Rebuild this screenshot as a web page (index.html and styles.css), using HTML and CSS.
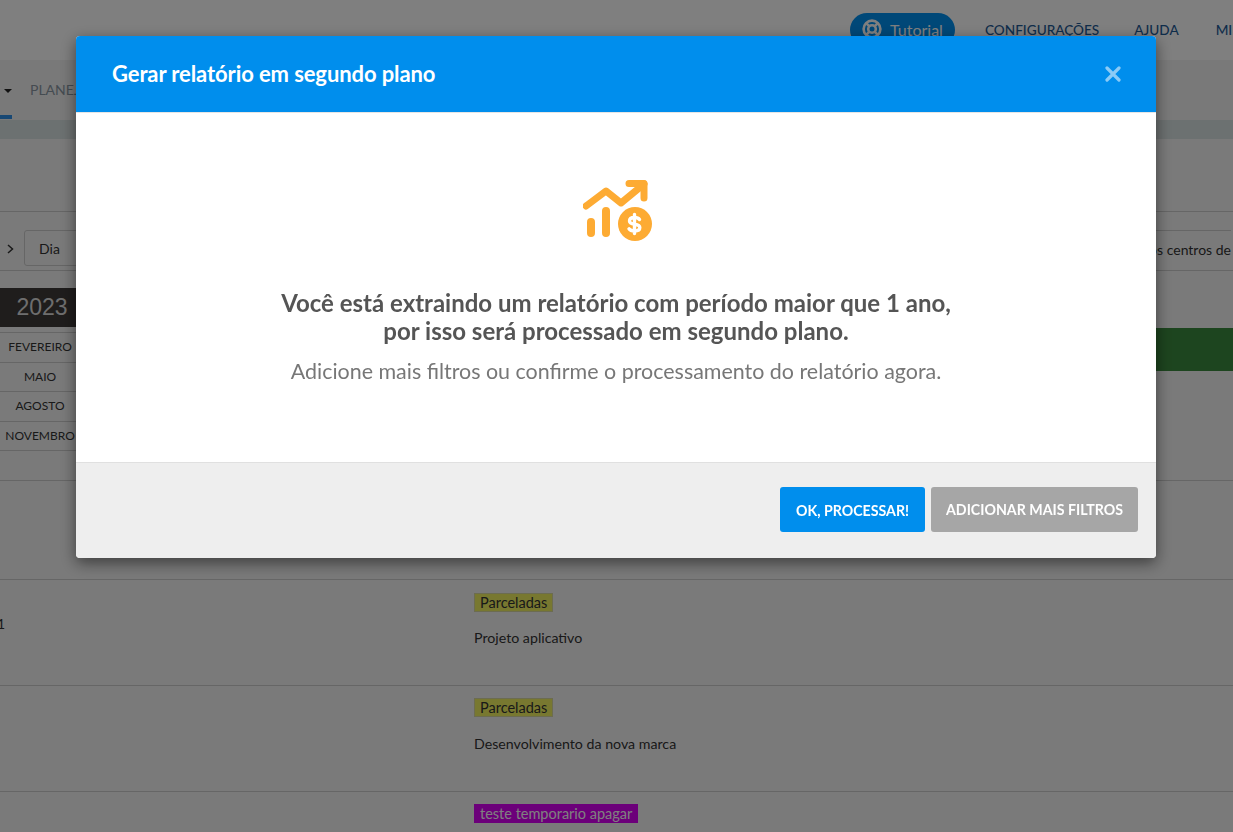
FILE: index.html
```html
<!DOCTYPE html>
<html lang="pt-BR">
<head>
<meta charset="utf-8">
<title>Gerar relatório em segundo plano</title>
<link rel="stylesheet" href="styles.css">
</head>
<body>
<div class="page">
  <header class="topbar">
    <a class="tutorial">
      <svg class="buoy" viewBox="0 0 20 20" width="20" height="20" aria-hidden="true">
        <circle cx="10" cy="10" r="8.4"/><circle cx="10" cy="10" r="3.8"/>
        <path d="M4.200 4.200l3.200 3.200M15.800 4.200l-3.200 3.200M4.200 15.800l3.200-3.200M15.800 15.800l-3.200-3.200"/>
      </svg>
      <span class="tutorial-label">Tutorial</span>
    </a>
    <a class="toplink">CONFIGURAÇÕES</a>
    <a class="toplink second">AJUDA</a>
    <a class="toplink last">MI</a>
  </header>
  <nav class="mainnav">
    <span class="nav-active"><i class="caret"></i></span>
    <span class="nav-item">PLANEJAMENTO</span>
  </nav>
  <div class="strip"></div>
  <div class="spacer"></div>
  <div class="toolbar">
    <svg class="chev" viewBox="0 0 7 10" width="7" height="10" aria-hidden="true"><path d="M1 1l4.500 4L1 9"/></svg>
    <span class="daybtn">Dia</span>
    <span class="filter">Todos os centros de</span>
  </div>
  <div class="calendar">
    <div class="months">
      <div class="year">2023</div>
      <div class="month">FEVEREIRO</div>
      <div class="month">MAIO</div>
      <div class="month">AGOSTO</div>
      <div class="month">NOVEMBRO</div>
    </div>
    <div class="balance"></div>
  </div>
  <div class="row row-a"></div>
  <div class="row row-b">
    <div class="cell-left">1</div>
    <div class="cell-right">
      <span class="tag tag-yellow">Parceladas</span>
      <span class="desc">Projeto aplicativo</span>
    </div>
  </div>
  <div class="row row-c">
    <div class="cell-left"></div>
    <div class="cell-right">
      <span class="tag tag-yellow">Parceladas</span>
      <span class="desc">Desenvolvimento da nova marca</span>
    </div>
  </div>
  <div class="row row-d">
    <div class="cell-left"></div>
    <div class="cell-right">
      <span class="tag tag-purple">teste temporario apagar</span>
    </div>
  </div>
</div>

<div class="backdrop"></div>
<div class="overlay">
  <section class="modal">
    <header class="modal-head">
      <h2 class="modal-title">Gerar relatório em segundo plano</h2>
      <svg class="close" viewBox="0 0 16 16" width="16" height="16" aria-hidden="true"><path d="M2 2l12 12M14 2L2 14"/></svg>
    </header>
    <div class="modal-body">
      <svg class="report-icon" viewBox="0 0 70 62" width="70" height="62" aria-hidden="true">
        <path class="line" d="M3 27L23 12L38 24L61 5"/>
        <path class="line" d="M46 4.500H61V19"/>
        <path class="bar" d="M8 43V54M23 32V54"/>
        <circle class="coin" cx="52" cy="45" r="17"/>
        <path class="dollar" d="M56.500 40.500C55.500 39 54 38.500 51.500 38.500C48.500 38.500 46.500 39.800 46.500 42C46.500 46.800 56.800 43.800 56.800 48.500C56.800 50.500 54.800 52 51.500 52C49 52 47 51.300 46 49.800M51.500 35.500V54.500"/>
      </svg>
      <h3 class="lead">Você está extraindo um relatório com período maior que 1 ano,<br>por isso será processado em segundo plano.</h3>
      <p class="sub">Adicione mais filtros ou confirme o processamento do relatório agora.</p>
    </div>
    <footer class="modal-foot">
      <button class="btn btn-primary">OK, PROCESSAR!</button>
      <button class="btn btn-muted">ADICIONAR MAIS FILTROS</button>
    </footer>
  </section>
</div>
</body>
</html>
```
FILE: styles.css
```css
* { box-sizing: border-box; }
html, body { margin: 0; height: 100%; overflow: hidden; }
body { font-family: Lato, "Open Sans", sans-serif; color: #333; background: #f5f5f5; }

.page { height: 832px; overflow: hidden; }

.topbar {
  height: 60px; background: #fff; display: flex; align-items: flex-start;
  padding-top: 13px; white-space: nowrap; overflow: hidden;
}
.tutorial {
  margin-left: 850px; width: 105px; height: 34px; border-radius: 17px; background: #0090f0;
  color: #fff; font-size: 16px; display: flex; align-items: center; gap: 8px; padding: 0 0 0 12px;
  flex: none;
}
.tutorial-label { margin-top: -2px; }
.buoy { fill: none; stroke: #fff; stroke-width: 2.600; flex: none; margin-top: -2px; }
.toplink { color: #1d5a96; font-size: 13.600px; font-weight: 500; margin-left: 30px; line-height: 34px; flex: none; }
.toplink.second { margin-left: 35px; }
.toplink.last { margin-left: 37px; }

.mainnav { height: 60px; background: #f3f3f3; display: flex; padding-top: 22px; overflow: hidden; }
.nav-active { width: 12px; height: 37px; border-bottom: 4px solid #3090e8; flex: none; position: relative; }
.caret {
  position: absolute; left: 4px; top: 7px; width: 0; height: 0;
  border-left: 4px solid transparent; border-right: 4px solid transparent; border-top: 4px solid #222;
}
.nav-item { margin-left: 18px; margin-top: -1px; font-size: 14px; white-space: nowrap; color: #8a97a3; }

.strip { height: 19px; background: #d9e2e2; }
.spacer { height: 73px; background: #f5f5f5; border-bottom: 1px solid #ccc; }

.toolbar {
  height: 59px; border-bottom: 1px solid #ccc; display: flex; align-items: flex-start;
  padding-top: 18px; font-size: 14px; white-space: nowrap; overflow: hidden;
}
.chev { margin: 14px 10px 0 7px; fill: none; stroke: #333; stroke-width: 1.500; flex: none; }
.daybtn {
  width: 60px; height: 36px; border: 1px solid #ccc; border-radius: 3px; display: flex; align-items: center;
  justify-content: center; padding-right: 9px; flex: none; color: #333;
}
.filter {
  margin-left: auto; margin-right: 2px; height: 41px; line-height: 37px; border-top: 1px solid #ccc;
  color: #333; flex: none; padding-left: 60px; font-size: 14px;
}

.calendar { height: 210px; border-bottom: 1px solid #ccc; display: flex; justify-content: space-between; }
.months { width: 80px; padding-top: 17px; font-size: 12px; text-align: center; }
.year {
  height: 39px; background: #3e3a39; color: #ddd; font-family: "Liberation Sans", Arial, sans-serif;
  font-size: 23px; line-height: 39px; padding-left: 4px; margin-bottom: 5px;
}
.month { height: 29.700px; line-height: 27px; border-top: 1px solid #ccc; color: #333; white-space: nowrap; }
.month:last-child { border-bottom: 1px solid #ccc; height: 30px; }
.balance { width: 77px; height: 43px; margin-top: 57px; background: #3b8a3e; }

.row { border-bottom: 1px solid #ccc; display: flex; overflow: hidden; }
.row-a { height: 99px; }
.row-b { height: 106px; }
.row-c { height: 106px; }
.row-d { height: 40px; border-bottom: 0; }
.cell-left { width: 474px; padding-top: 35px; flex: none; color: #333; font-size: 14px; text-indent: -3px; }
.cell-right { padding-top: 13px; display: flex; flex-direction: column; align-items: flex-start; gap: 17px; }
.row-c .cell-right { padding-top: 12px; gap: 18px; }
.row-d .cell-right { padding-top: 12px; }
.tag { font-size: 14.500px; line-height: 17px; padding: 0 5px; height: 19px; border: 1px solid #d8d8a0; white-space: nowrap; }
.tag-yellow { background: #f0f060; color: #333; }
.tag-purple { background: #d800f4; border-color: #d800f4; color: #fff; padding: 0 5px; }
.desc { color: #333; font-size: 14.200px; line-height: 17px; }

.backdrop { position: fixed; inset: 0; background: rgba(0, 0, 0, .5); }
.overlay { position: fixed; inset: 0; padding: 36px 0 0 76px; }

.modal {
  width: 1080px; height: 522px; background: #fff; border-radius: 4px;
  box-shadow: 0 5px 15px rgba(0, 0, 0, .5); display: flex; flex-direction: column; overflow: hidden;
}
.modal-head {
  height: 77px; flex: none; background: #008eed; border-bottom: 1px solid #e5e5e5; padding: 0 35px 0 36px;
  display: flex; align-items: center; justify-content: space-between;
}
.modal-title { margin: 0 0 2px; color: #fff; font-size: 22px; font-weight: 700; letter-spacing: -.1px; }
.close { stroke: #8ccbf6; stroke-width: 3.200; fill: none; stroke-linecap: round; }

.modal-body { flex: 1; text-align: center; padding-top: 66px; color: #555; }
.report-icon { display: block; margin: 0 auto; transform: translateX(2px); fill: none; }
.report-icon .line { stroke: #fdab33; stroke-width: 7; stroke-linecap: round; stroke-linejoin: round; }
.report-icon .bar { stroke: #fdab33; stroke-width: 8; stroke-linecap: round; }
.report-icon .coin { fill: #fdab33; }
.report-icon .dollar { stroke: #fff; stroke-width: 3.400; stroke-linecap: round; stroke-linejoin: round; }
.lead { margin: 48px 0 0; font-size: 24px; line-height: 28px; font-weight: 700; color: #555; }
.sub { margin: 12px 0 0; font-size: 21.450px; line-height: 28px; color: #777; }

.modal-foot {
  height: 96px; flex: none; background: #eee; border-top: 1px solid #e0e0e0;
  display: flex; gap: 6px; justify-content: flex-end; padding: 24px 18px 0 0;
}
.btn {
  height: 45px; border: 0; border-radius: 3px; color: #fff; font-family: inherit; font-size: 14.200px; font-weight: 700;
  display: block; padding: 0;
}
.btn-primary { width: 145px; background: #008eed; padding-top: 2px; }
.btn-muted { width: 207px; background: #a6a6a6; padding-bottom: 1px; }
```
